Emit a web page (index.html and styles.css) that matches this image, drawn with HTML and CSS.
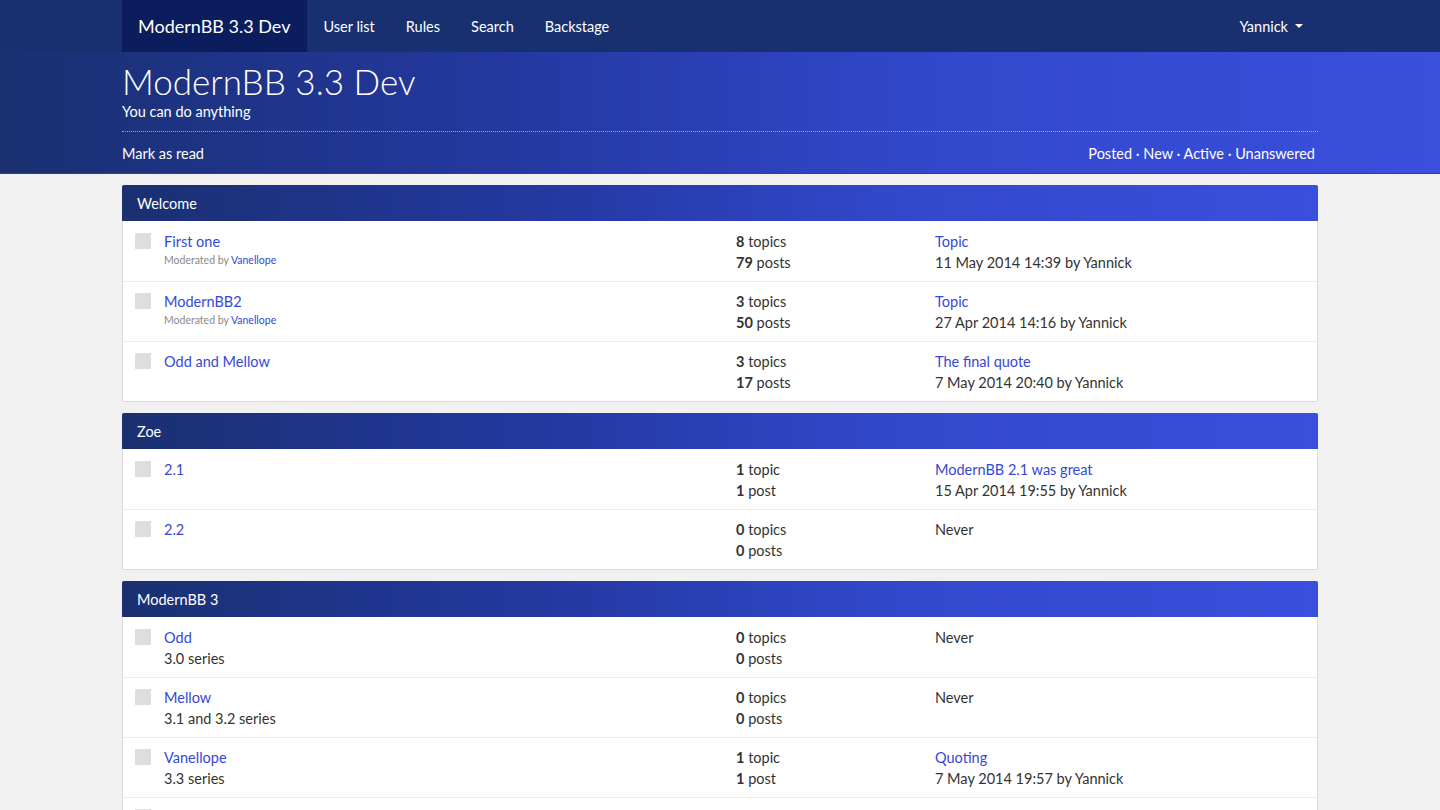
FILE: index.html
```html
<!DOCTYPE html>
<html>
<head>
<meta charset="utf-8">
<title>ModernBB 3.3 Dev</title>
<link rel="stylesheet" href="styles.css">
</head>
<body>
<nav class="topbar">
  <div class="container topbar-inner">
    <a class="brand" href="#">ModernBB 3.3 Dev</a>
    <ul class="nav-links">
      <li><a href="#">User list</a></li>
      <li><a href="#">Rules</a></li>
      <li><a href="#">Search</a></li>
      <li><a href="#">Backstage</a></li>
    </ul>
    <div class="nav-user"><a href="#">Yannick <span class="caret"></span></a></div>
  </div>
</nav>
<header class="hero">
  <div class="container">
    <h1 class="hero-title">ModernBB 3.3 Dev</h1>
    <p class="hero-desc">You can do anything</p>
    <div class="hero-bar">
      <a href="#">Mark as read</a>
      <div class="hero-links"><a href="#">Posted</a> · <a href="#">New</a> · <a href="#">Active</a> · <a href="#">Unanswered</a></div>
    </div>
  </div>
</header>
<main class="container main">
  <section class="board">
    <h2 class="board-head">Welcome</h2>
    <div class="forum">
      <span class="forum-icon"></span>
      <div class="forum-name"><a href="#" class="forum-link">First one</a><div class="mods">Moderated by <a href="#">Vanellope</a></div></div>
      <div class="forum-stats"><b>8</b> topics<br><b>79</b> posts</div>
      <div class="forum-last"><a href="#">Topic</a><br>11 May 2014 14:39 by Yannick</div>
    </div>
    <div class="forum">
      <span class="forum-icon"></span>
      <div class="forum-name"><a href="#" class="forum-link">ModernBB2</a><div class="mods">Moderated by <a href="#">Vanellope</a></div></div>
      <div class="forum-stats"><b>3</b> topics<br><b>50</b> posts</div>
      <div class="forum-last"><a href="#">Topic</a><br>27 Apr 2014 14:16 by Yannick</div>
    </div>
    <div class="forum">
      <span class="forum-icon"></span>
      <div class="forum-name"><a href="#" class="forum-link">Odd and Mellow</a></div>
      <div class="forum-stats"><b>3</b> topics<br><b>17</b> posts</div>
      <div class="forum-last"><a href="#">The final quote</a><br>7 May 2014 20:40 by Yannick</div>
    </div>
  </section>
  <section class="board">
    <h2 class="board-head">Zoe</h2>
    <div class="forum">
      <span class="forum-icon"></span>
      <div class="forum-name"><a href="#" class="forum-link">2.1</a></div>
      <div class="forum-stats"><b>1</b> topic<br><b>1</b> post</div>
      <div class="forum-last"><a href="#">ModernBB 2.1 was great</a><br>15 Apr 2014 19:55 by Yannick</div>
    </div>
    <div class="forum">
      <span class="forum-icon"></span>
      <div class="forum-name"><a href="#" class="forum-link">2.2</a></div>
      <div class="forum-stats"><b>0</b> topics<br><b>0</b> posts</div>
      <div class="forum-last">Never</div>
    </div>
  </section>
  <section class="board">
    <h2 class="board-head">ModernBB 3</h2>
    <div class="forum">
      <span class="forum-icon"></span>
      <div class="forum-name"><a href="#" class="forum-link">Odd</a><div class="desc">3.0 series</div></div>
      <div class="forum-stats"><b>0</b> topics<br><b>0</b> posts</div>
      <div class="forum-last">Never</div>
    </div>
    <div class="forum">
      <span class="forum-icon"></span>
      <div class="forum-name"><a href="#" class="forum-link">Mellow</a><div class="desc">3.1 and 3.2 series</div></div>
      <div class="forum-stats"><b>0</b> topics<br><b>0</b> posts</div>
      <div class="forum-last">Never</div>
    </div>
    <div class="forum">
      <span class="forum-icon"></span>
      <div class="forum-name"><a href="#" class="forum-link">Vanellope</a><div class="desc">3.3 series</div></div>
      <div class="forum-stats"><b>1</b> topic<br><b>1</b> post</div>
      <div class="forum-last"><a href="#">Quoting</a><br>7 May 2014 19:57 by Yannick</div>
    </div>
    <div class="forum">
      <span class="forum-icon"></span>
      <div class="forum-name"><a href="#" class="forum-link">ModernBB 3.4</a><div class="desc">3.4 series</div></div>
      <div class="forum-stats"><b>0</b> topics<br><b>0</b> posts</div>
      <div class="forum-last">Never</div>
    </div>
  </section>
</main>
</body>
</html>
```
FILE: styles.css
```css
* { box-sizing: border-box; }
html, body { margin: 0; padding: 0; }
body {
  background: #f1f1f1;
  font-family: Lato, "Open Sans", sans-serif;
  font-size: 14.5px;
  color: #333;
}
a { color: #3548d4; text-decoration: none; }
.container { width: 1196px; margin: 0 auto; }

.topbar { background: #182f70; height: 52px; }
.topbar-inner { display: flex; align-items: stretch; height: 52px; }
.brand {
  display: flex; align-items: center; white-space: nowrap;
  background: #0b1d5d; color: #fff;
  font-size: 18px; padding: 0 16px; width: 185px;
}
.nav-links { display: flex; list-style: none; margin: 0; padding: 0 0 0 1px; }
.nav-links li { display: flex; }
.nav-links a { display: flex; align-items: center; color: #fff; font-size: 14.5px; padding: 0 15.5px; white-space: nowrap; }
.nav-user { margin-left: auto; display: flex; }
.nav-user a { display: flex; align-items: center; color: #fff; font-size: 14.5px; padding: 0 15px; }
.caret {
  display: inline-block; width: 0; height: 0; margin-left: 7px;
  border-left: 4px solid transparent; border-right: 4px solid transparent; border-top: 4px solid #fff;
}

.hero {
  background: linear-gradient(to right, #1a3071 0%, #2438a0 35%, #3248cc 65%, #3a4fdc 100%);
  color: #fff;
  height: 122px;
  border-bottom: 1px solid #2a3ab0;
}
.hero-title { margin: 0; padding-top: 9px; font-size: 35px; font-weight: 300; line-height: 40px; }
.hero-desc { margin: 1px 0 0; font-size: 14.5px; line-height: 20px; }
.hero-bar {
  margin-top: 9px;
  border-top: 1px dotted rgba(255,255,255,0.55);
  display: flex; justify-content: space-between;
  padding: 12px 0 0;
  line-height: 20px; font-size: 14.5px;
}
.hero-bar a { color: #fff; }
.hero-links { padding-right: 3px; }

.main { padding-top: 11px; }
.board { background: #fff; border: 1px solid #dcdcdc; border-top: 0; margin-bottom: 11px; }
.board-head {
  margin: 0 -1px; height: 36px;
  background: linear-gradient(to right, #1a3071 0%, #2438a0 35%, #3248cc 65%, #3a4fdc 100%);
  color: #fff; font-size: 14.5px; font-weight: 400;
  padding: 0 15px; display: flex; align-items: center;
  border-radius: 2px 2px 0 0;
}
.forum {
  display: flex; height: 60px; padding: 9px 12px 0;
  border-top: 1px solid #ececec; line-height: 21px; font-size: 14.5px;
}
.board-head + .forum { border-top-color: #fff; }
.forum-icon { width: 16px; height: 16px; background: #dedede; margin-top: 2px; margin-right: 13px; flex: none; }
.forum-name { flex: 1; }
.mods { font-size: 10.5px; color: #888; line-height: 14px; margin-top: 1px; }
.mods a { color: #3548d4; }
.desc { color: #333; }
.forum-stats { width: 199px; flex: none; }
.forum-stats b { font-weight: 700; }
.forum-last { width: 370px; flex: none; }
```
